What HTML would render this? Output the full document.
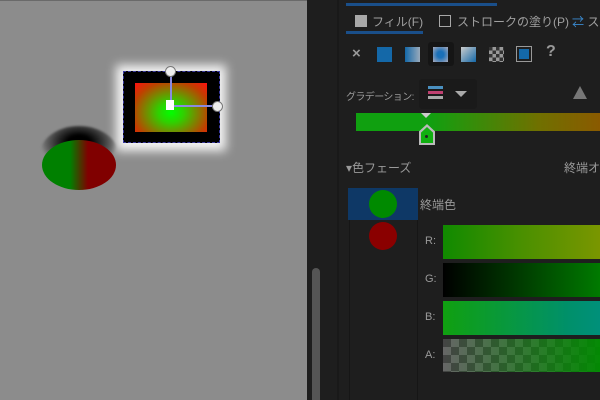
<!DOCTYPE html>
<html><head><meta charset="utf-8"><style>
*{margin:0;padding:0;box-sizing:border-box}
body{width:600px;height:400px;overflow:hidden;background:#1e1e1e;position:relative;font-family:"Liberation Sans","Noto Sans CJK JP",sans-serif;color:#9a9a9a;font-size:11px}
.a{position:absolute;white-space:nowrap}
</style></head><body>
<div class="a" style="left:0;top:0;width:307px;height:400px;background:#8c8c8c"></div>
<div class="a" style="left:0;top:0;width:307px;height:1px;background:#6a6a6a"></div>
<div class="a" style="left:312px;top:268px;width:8px;height:132px;background:#555;border-radius:4px 4px 0 0"></div>
<div class="a" style="left:337px;top:0;width:2px;height:400px;background:#191919"></div>
<!-- canvas objects -->
<div class="a" style="left:116px;top:65px;width:110px;height:86px;background:#fff;filter:blur(5px);opacity:.9"></div>
<div class="a" style="left:123px;top:71px;width:97px;height:72px;background:#000;border:1px dashed #3a3aa0"></div>
<div class="a" style="left:135px;top:83px;width:72px;height:49px;background:radial-gradient(ellipse at 50% 60%,#00ff00 0%,#30d000 25%,#c04000 75%,#ff1010 100%)"></div>
<div class="a" style="left:170px;top:71px;width:2px;height:36px;background:#8a8ae0"></div>
<div class="a" style="left:170px;top:105px;width:48px;height:2px;background:#8a8ae0"></div>
<div class="a" style="left:165px;top:66px;width:11px;height:11px;border-radius:50%;background:#eee;border:1px solid #777"></div>
<div class="a" style="left:212px;top:101px;width:11px;height:11px;border-radius:50%;background:#eee;border:1px solid #777"></div>
<div class="a" style="left:166px;top:100px;width:8px;height:10px;background:#fff"></div>
<div class="a" style="left:40px;top:126px;width:78px;height:56px;border-radius:50%;background:radial-gradient(ellipse 50% 45% at 50% 30%,#000 30%,#333 60%,rgba(60,60,60,.5) 85%,transparent 100%);filter:blur(1px)"></div>
<div class="a" style="left:42px;top:140px;width:74px;height:50px;border-radius:50%;background:linear-gradient(90deg,#008000 0%,#008000 38%,#800000 62%,#800000 100%)"></div>
<!-- panel -->
<div class="a" style="left:346px;top:3px;width:151px;height:3px;background:#1a4f8a"></div>
<div class="a" style="left:355px;top:15px;width:12px;height:12px;background:#a8a8a8"></div>
<div class="a" style="left:372px;top:13px;font-size:12px;color:#a0a0a0">フィル(F)</div>
<div class="a" style="left:346px;top:31px;width:77px;height:3px;background:#1a4f8a"></div>
<div class="a" style="left:439px;top:15px;width:12px;height:12px;border:1.5px solid #a8a8a8"></div>
<div class="a" style="left:457px;top:13px;font-size:12px;color:#a0a0a0">ストロークの塗り(P)</div>
<div class="a" style="left:572px;top:13px;font-size:12px;color:#a0a0a0"><span style="color:#3a8ad0">⇄</span> ス</div>
<!-- tool icons -->
<div class="a" style="left:352px;top:45px;font-weight:bold;color:#999;font-size:15px">×</div>
<div class="a" style="left:377px;top:47px;width:15px;height:15px;background:#1468a8"></div>
<div class="a" style="left:405px;top:47px;width:15px;height:15px;background:linear-gradient(90deg,#1468a8,#9ab)"></div>
<div class="a" style="left:428px;top:42px;width:26px;height:24px;background:#151515;border-radius:3px"></div>
<div class="a" style="left:433px;top:47px;width:15px;height:15px;background:radial-gradient(circle,#1a70b8 30%,#aab 100%)"></div>
<div class="a" style="left:461px;top:47px;width:15px;height:15px;background:linear-gradient(135deg,#ccc,#1468a8)"></div>
<div class="a" style="left:489px;top:47px;width:15px;height:15px;background:repeating-conic-gradient(#999 0 25%,#333 0 50%) 0 0/7px 7px"></div>
<div class="a" style="left:516px;top:46px;width:16px;height:16px;border:1.5px solid #999;background:#1468a8;outline:2px solid #1e1e1e;outline-offset:-3.5px"></div>
<div class="a" style="left:546px;top:43px;font-weight:bold;font-size:16px;color:#999">?</div>
<!-- gradient row -->
<div class="a" style="left:346px;top:88px;font-size:10px;letter-spacing:-.6px">グラデーション:</div>
<div class="a" style="left:419px;top:79px;width:58px;height:30px;background:#1a1a1a;border-radius:3px"></div>
<div class="a" style="left:428px;top:86px;width:15px;height:3px;background:#4a90c0"></div>
<div class="a" style="left:428px;top:91px;width:15px;height:3px;background:#c04070"></div>
<div class="a" style="left:428px;top:96px;width:15px;height:3px;background:#aaa"></div>
<div class="a" style="left:455px;top:91px;width:0;height:0;border-left:6px solid transparent;border-right:6px solid transparent;border-top:6px solid #aaa"></div>
<div class="a" style="left:573px;top:86px;width:0;height:0;border-left:7px solid transparent;border-right:7px solid transparent;border-bottom:13px solid #777"></div>
<div class="a" style="left:356px;top:113px;width:244px;height:18px;background:linear-gradient(90deg,#10a010 0%,#10a010 30%,#707000 75%,#8a5a00 100%)"></div>
<div class="a" style="left:421px;top:113px;width:0;height:0;border-left:5px solid transparent;border-right:5px solid transparent;border-top:5px solid #ccc"></div>
<div class="a" style="left:419px;top:124px;width:16px;height:21px;background:#bbb;clip-path:polygon(50% 0,100% 35%,100% 100%,0 100%,0 35%)"></div>
<div class="a" style="left:421px;top:127px;width:12px;height:16px;background:#10b010;clip-path:polygon(50% 0,100% 35%,100% 100%,0 100%,0 35%)"></div>
<div class="a" style="left:425px;top:135px;width:3px;height:3px;background:#222;border-radius:50%"></div>
<!-- phase -->
<div class="a" style="left:346px;top:159px;font-size:12px">▾色フェーズ</div>
<div class="a" style="left:564px;top:159px;font-size:12px">終端オ</div>
<div class="a" style="left:348px;top:188px;width:70px;height:32px;background:#0e3866"></div>
<div class="a" style="left:349px;top:220px;width:1px;height:180px;background:#161616"></div>
<div class="a" style="left:417px;top:220px;width:1px;height:180px;background:#161616"></div>
<div class="a" style="left:369px;top:190px;width:28px;height:28px;border-radius:50%;background:#008a00"></div>
<div class="a" style="left:369px;top:222px;width:28px;height:28px;border-radius:50%;background:#8a0000"></div>
<div class="a" style="left:420px;top:196px;font-size:12px">終端色</div>
<div class="a" style="left:425px;top:235px">R:</div>
<div class="a" style="left:425px;top:273px">G:</div>
<div class="a" style="left:425px;top:311px">B:</div>
<div class="a" style="left:425px;top:349px">A:</div>
<div class="a" style="left:443px;top:225px;width:157px;height:34px;background:linear-gradient(90deg,#108a00,#4a9000 50%,#7a9600)"></div>
<div class="a" style="left:443px;top:263px;width:157px;height:34px;background:linear-gradient(90deg,#000,#003000 40%,#007a00)"></div>
<div class="a" style="left:443px;top:301px;width:157px;height:34px;background:linear-gradient(90deg,#10a010,#00906a 80%,#00907a)"></div>
<div class="a" style="left:443px;top:339px;width:157px;height:33px;background:linear-gradient(90deg,rgba(0,140,0,0),rgba(0,140,0,.95)),repeating-conic-gradient(#666 0 25%,#444 0 50%) 0 0/16px 16px"></div>
</body></html>
